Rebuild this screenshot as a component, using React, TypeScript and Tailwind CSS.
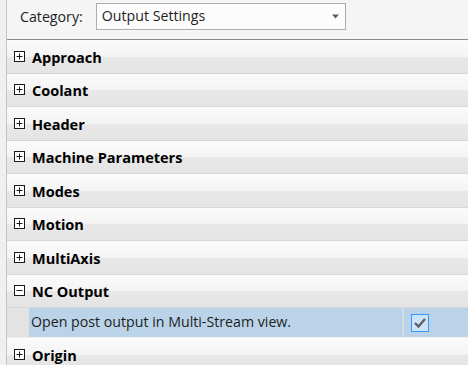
import React from 'react'

const groups = [
  { name: 'Approach', open: false },
  { name: 'Coolant', open: false },
  { name: 'Header', open: false },
  { name: 'Machine Parameters', open: false },
  { name: 'Modes', open: false },
  { name: 'Motion', open: false },
  { name: 'MultiAxis', open: false },
  { name: 'NC Output', open: true },
  { name: 'Origin', open: false },
]

const ExpandBox: React.FC<{ open: boolean }> = ({ open }) => (
  <svg width="11" height="11" viewBox="0 0 11 11" className="shrink-0">
    <rect x="0.5" y="0.5" width="10" height="10" fill="#fff" stroke="#1a1a1a" />
    <line x1="2.5" y1="5.5" x2="8.5" y2="5.5" stroke="#1a1a1a" />
    {!open && <line x1="5.5" y1="2.5" x2="5.5" y2="8.5" stroke="#1a1a1a" />}
  </svg>
)

const GroupRow: React.FC<{ name: string; open: boolean }> = ({ name, open }) => (
  <div className="h-[33.5px] shrink-0 flex items-center gap-[7px] pl-[7px] border-b border-[#d6d6d6] bg-[linear-gradient(to_bottom,#fbfbfb_0%,#f4f4f4_50%,#e8e8e8_51%,#e4e4e4_100%)]">
    <ExpandBox open={open} />
    <span className="text-[14.5px] font-bold text-black leading-none pt-[3px]">{name}</span>
  </div>
)

export default function App() {
  return (
    <div
      className="w-[468px] h-[365px] overflow-hidden flex bg-[#f0f0f0]"
      style={{ fontFamily: '"Open Sans", "Noto Sans", sans-serif' }}
    >
      {/* left gutter */}
      <div className="w-[7px] shrink-0 border-r border-[#c4c4c4] bg-[#f0f0f0]" />

      <div className="flex-1 flex flex-col min-w-0">
        {/* category selector */}
        <div className="h-[40px] shrink-0 flex items-start gap-[13px] pl-[13px] pt-[3px] bg-[#f5f5f5] border-b border-[#8c8c8c]">
          <span className="text-[14.2px] text-[#1e1e1e] leading-[27px]">Category:</span>
          <div className="w-[250px] h-[27px] flex items-center justify-between pl-[5px] pr-[6px] bg-[#fcfcfc] border border-[#adadad]">
            <span className="text-[14.2px] text-[#1e1e1e] leading-none">Output Settings</span>
            <svg width="7" height="5" viewBox="0 0 7 5">
              <path d="M0 0.5 H7 L3.5 4.5 Z" fill="#606060" />
            </svg>
          </div>
        </div>

        {/* property list */}
        <div className="flex-1 flex flex-col bg-white">
          {groups.map((g) => (
            <React.Fragment key={g.name}>
              <GroupRow name={g.name} open={g.open} />
              {g.open && (
                <div className="h-[30px] shrink-0 flex border-b border-[#f0f0f0]">
                  <div className="w-[22px] shrink-0 bg-[#e3e3e3]" />
                  <div className="flex-1 flex items-center bg-[#bad3e8] min-w-0">
                    <span className="pl-[2px] w-[375px] shrink-0 text-[14.2px] text-[#1e1e1e] leading-none border-r-2 border-[#d4dde6] h-full flex items-center">
                      Open post output in Multi-Stream view.
                    </span>
                    <div className="pl-[7px] flex items-center">
                      <div className="w-[18px] h-[18px] border border-[#3399ff] bg-[#cce4f7] flex items-center justify-center">
                        <svg width="14" height="12" viewBox="0 0 14 12">
                          <path d="M2 6 L5.5 9.5 L12 2" fill="none" stroke="#606060" strokeWidth="2.4" />
                        </svg>
                      </div>
                    </div>
                  </div>
                </div>
              )}
            </React.Fragment>
          ))}
        </div>
      </div>
    </div>
  )
}
